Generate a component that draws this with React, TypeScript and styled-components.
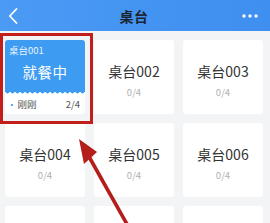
import React from "react";
import styled, { createGlobalStyle } from "styled-components";

const Global = createGlobalStyle`
  html, body { margin: 0; padding: 0; background: #f3f4f6; }
  body { font-family: "Noto Sans CJK SC", "Noto Sans", sans-serif; }
  #root { width: 270px; height: 223px; overflow: hidden; position: relative; }
`;

const Page = styled.div`
  width: 270px;
  height: 223px;
  position: relative;
  background: #f3f4f6;
  overflow: hidden;
`;

const Header = styled.header`
  height: 31px;
  display: flex;
  align-items: center;
  justify-content: space-between;
  padding: 0 10px 0 8px;
  background: linear-gradient(90deg, #4b9bf5 0%, #4494f2 50%, #3f8ff0 100%);
`;

const Title = styled.div`
  font-size: 14px;
  font-weight: 700;
  color: #1c2533;
  letter-spacing: 0.5px;
`;

const IconBox = styled.div`
  width: 18px;
  display: flex;
  align-items: center;
`;

const Grid = styled.div`
  display: grid;
  grid-template-columns: repeat(3, 80px);
  grid-auto-rows: 74px;
  column-gap: 9px;
  row-gap: 9px;
  padding: 9px 0 0 5px;
`;

const Card = styled.div`
  background: #ffffff;
  border-radius: 3px;
  display: flex;
  flex-direction: column;
  align-items: center;
  justify-content: center;
  overflow: hidden;
`;

const Name = styled.div`
  font-size: 14px;
  color: #333;
  line-height: 18px;
  margin-top: 6px;
`;

const Seats = styled.div`
  font-size: 9.5px;
  color: #b0b0b0;
  line-height: 12px;
  margin-top: 6px;
`;

const BusyCard = styled.div`
  background: #ffffff;
  border-radius: 3px;
  display: flex;
  flex-direction: column;
  overflow: hidden;
`;

const BusyTop = styled.div`
  position: relative;
  height: 52px;
  background: #3d9bf1;
  color: #fff;
  display: flex;
  flex-direction: column;
  padding: 4px 0 0 4px;
  box-sizing: border-box;
`;

const BusyName = styled.div`
  font-size: 9.5px;
  line-height: 13px;
  color: #eaf4ff;
`;

const BusyState = styled.div`
  font-size: 14.5px;
  line-height: 20px;
  text-align: center;
  margin-top: 5px;
  margin-left: -4px;
  letter-spacing: 0.5px;
`;

const Wave = styled.svg`
  position: absolute;
  left: 0;
  bottom: -2px;
  width: 80px;
  height: 3px;
`;

const BusyFoot = styled.div`
  flex: 1;
  display: flex;
  align-items: center;
  justify-content: space-between;
  padding: 2px 5px 0 2px;
  font-size: 9.5px;
  color: #555;
`;

const Dot = styled.span`
  color: #3d9bf1;
  margin-right: 1px;
`;

const Highlight = styled.div`
  position: absolute;
  left: 0;
  top: 33px;
  width: 93px;
  height: 91px;
  border: 3px solid #c21f1c;
  box-sizing: border-box;
  pointer-events: none;
`;

const Arrow = styled.svg`
  position: absolute;
  left: 0;
  top: 0;
  width: 270px;
  height: 223px;
  pointer-events: none;
`;

const tables = ["002", "003", "004", "005", "006", "007", "008", "009"];

export default function App() {
  const wavePath = (() => {
    let d = "M0 0 ";
    for (let x = 0; x < 80; x += 5) {
      d += `Q${x + 2.5} 5 ${x + 5} 0 `;
    }
    return d + "Z";
  })();
  return (
    <>
      <Global />
      <Page>
        <Header>
          <IconBox>
            <svg width="10" height="16" viewBox="0 0 10 16">
              <path d="M8.5 1 L1.8 8 L8.5 15" fill="none" stroke="#fff" strokeWidth="1.8" strokeLinecap="round" strokeLinejoin="round" />
            </svg>
          </IconBox>
          <Title>桌台</Title>
          <IconBox>
            <svg width="16" height="4" viewBox="0 0 16 4">
              <circle cx="2" cy="2" r="1.7" fill="#fff" />
              <circle cx="8" cy="2" r="1.7" fill="#fff" />
              <circle cx="14" cy="2" r="1.7" fill="#fff" />
            </svg>
          </IconBox>
        </Header>
        <Grid>
          <BusyCard>
            <BusyTop>
              <BusyName>桌台001</BusyName>
              <BusyState>就餐中</BusyState>
              <Wave viewBox="0 0 80 3" preserveAspectRatio="none">
                <path d={wavePath} fill="#3d9bf1" />
              </Wave>
            </BusyTop>
            <BusyFoot>
              <span><Dot>•</Dot>刚刚</span>
              <span>2/4</span>
            </BusyFoot>
          </BusyCard>
          {tables.map((t) => (
            <Card key={t}>
              <Name>桌台{t}</Name>
              <Seats>0/4</Seats>
            </Card>
          ))}
        </Grid>
        <Highlight />
        <Arrow viewBox="0 0 270 223">
          <line x1="128" y1="226" x2="83" y2="146" stroke="#b31d1a" strokeWidth="3.6" />
          <polygon points="79,139 97,152 84,164" fill="#b31d1a" />
        </Arrow>
      </Page>
    </>
  );
}
